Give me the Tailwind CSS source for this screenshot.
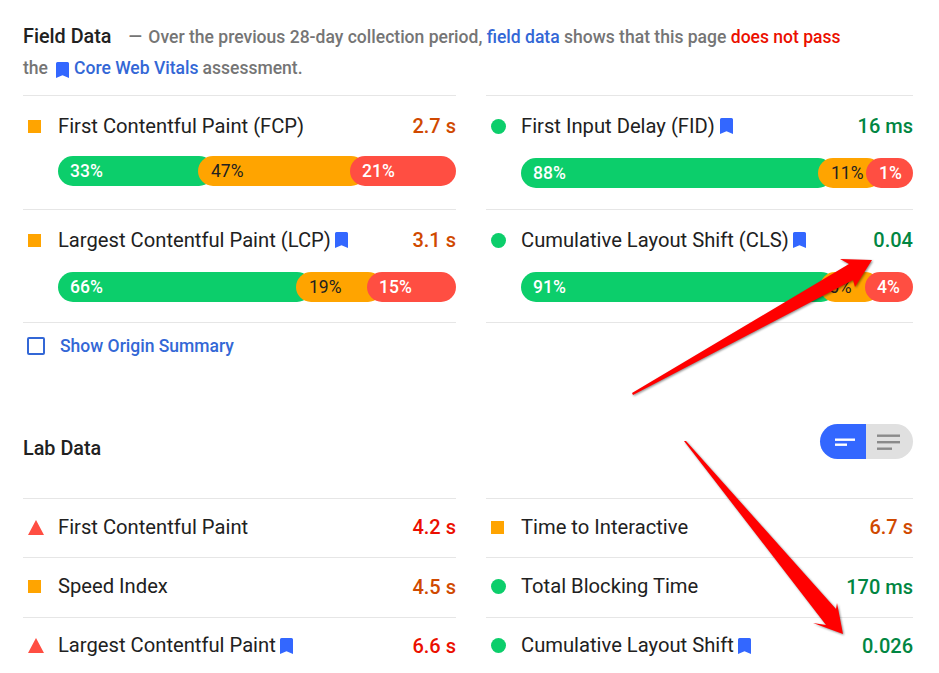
<!doctype html>
<html><head><meta charset="utf-8">
<script src="https://cdn.jsdelivr.net/npm/@tailwindcss/browser@4"></script>
</head>
<body class="bg-white">
<div class="relative w-[939px] h-[673px] overflow-hidden font-['Roboto',sans-serif] text-[#212121]">
  <svg width="0" height="0" class="absolute"><defs><symbol id="bm" viewBox="0 0 13 16"><path d="M1.5 0H11.5A1.5 1.5 0 0 1 13 1.5V16L6.5 13.2L0 16V1.5A1.5 1.5 0 0 1 1.5 0Z" fill="#3367FF"/></symbol></defs></svg>

  <div class="px-[23px] pt-[21px]">
    <div class="h-[74px] w-[890px] text-[17.55px] leading-[31px] font-medium text-[#757575]">
      <div class="flex items-baseline"><span class="text-[19.8px] font-medium text-[#212121] mr-[17px]">Field Data</span><span><span class="mr-[2px]">—</span> Over the previous 28-day collection period, <span class="text-[#3367d6]">field data</span> shows that this page <span class="text-[#eb0f00]">does not pass</span></span></div>
      <div class="flex items-center">the<svg class="w-[13px] h-[16px] ml-[8px] mr-[5px] mt-[2px]"><use href="#bm"/></svg><span class="text-[#3367d6]">Core Web Vitals</span><span class="ml-[4px]">assessment.</span></div>
    </div>

    <div class="grid grid-cols-[433px_427px] gap-x-[30px]">
      <div class="h-[115px] border-y border-[#e6e6e6] pt-[16px]">
        <div class="flex items-center h-[28px] text-[20.2px]"><span class="w-[13px] h-[13px] bg-[#ffa400] ml-[5px] mr-[17px]"></span><span>First Contentful Paint (FCP)</span><span class="ml-auto text-[20px] font-medium text-[#d04900]">2.7 s</span></div>
        <div class="flex ml-[35px] mt-[16px] h-[30px] text-[17.5px] leading-[30px]">
          <div class="w-[156px] shrink-0 rounded-full bg-[#0cce6b] font-medium text-white pl-[12px]">33%</div>
          <div class="w-[168px] shrink-0 -ml-[16px] rounded-full bg-[#ffa400] text-[#212121] pl-[13px]">47%</div>
          <div class="w-[106px] shrink-0 -ml-[16px] rounded-full bg-[#ff4e42] font-medium text-white pl-[12px]">21%</div>
        </div>
      </div>
      <div class="h-[115px] border-y border-[#e6e6e6] pt-[16px]">
        <div class="flex items-center h-[28px] text-[20.2px]"><span class="w-[15px] h-[15px] rounded-full bg-[#0cce6b] ml-[5px] mr-[15px]"></span><span>First Input Delay (FID)</span><svg class="w-[13px] h-[16px] ml-[5px]"><use href="#bm"/></svg><span class="ml-auto text-[20px] font-medium text-[#018642]">16 ms</span></div>
        <div class="flex ml-[35px] mt-[18px] h-[30px] text-[17.5px] leading-[30px]">
          <div class="w-[312px] shrink-0 rounded-full bg-[#0cce6b] font-medium text-white pl-[12px]">88%</div>
          <div class="w-[64px] shrink-0 -ml-[15px] rounded-full bg-[#ffa400] text-[#212121] pl-[13px]">11%</div>
          <div class="w-[47px] shrink-0 -ml-[16px] rounded-full bg-[#ff4e42] font-medium text-white pl-[13px]">1%</div>
        </div>
      </div>

      <div class="h-[113px] border-b border-[#e6e6e6] pt-[16px]">
        <div class="flex items-center h-[28px] text-[20.2px]"><span class="w-[13px] h-[13px] bg-[#ffa400] ml-[5px] mr-[17px]"></span><span>Largest Contentful Paint (LCP)</span><svg class="w-[13px] h-[16px] ml-[4px]"><use href="#bm"/></svg><span class="ml-auto text-[20px] font-medium text-[#d04900]">3.1 s</span></div>
        <div class="flex ml-[35px] mt-[18px] h-[30px] text-[17.5px] leading-[30px]">
          <div class="w-[254px] shrink-0 rounded-full bg-[#0cce6b] font-medium text-white pl-[12px]">66%</div>
          <div class="w-[87px] shrink-0 -ml-[16px] rounded-full bg-[#ffa400] text-[#212121] pl-[13px]">19%</div>
          <div class="w-[89px] shrink-0 -ml-[16px] rounded-full bg-[#ff4e42] font-medium text-white pl-[12px]">15%</div>
        </div>
      </div>
      <div class="h-[113px] border-b border-[#e6e6e6] pt-[16px]">
        <div class="flex items-center h-[28px] text-[20.2px]"><span class="w-[15px] h-[15px] rounded-full bg-[#0cce6b] ml-[5px] mr-[15px]"></span><span>Cumulative Layout Shift (CLS)</span><svg class="w-[13px] h-[16px] ml-[4px]"><use href="#bm"/></svg><span class="ml-auto text-[20px] font-medium text-[#018642]">0.04</span></div>
        <div class="flex ml-[35px] mt-[18px] h-[30px] text-[17.5px] leading-[30px]">
          <div class="w-[315px] shrink-0 rounded-full bg-[#0cce6b] font-medium text-white pl-[12px]">91%</div>
          <div class="w-[60px] shrink-0 -ml-[16px] rounded-full bg-[#ffa400] text-[#212121] pl-[9px]">5%</div>
          <div class="w-[48px] shrink-0 -ml-[15px] rounded-full bg-[#ff4e42] font-medium text-white pl-[12px]">4%</div>
        </div>
      </div>
    </div>

    <div class="flex items-center mt-[14px] h-[18px] pl-[4px]"><span class="w-[18px] h-[18px] border-2 border-[#3367d6] rounded-[2px]"></span><span class="ml-[15px] text-[17.5px] font-medium text-[#3367d6]">Show Origin Summary</span></div>

    <div class="flex justify-between items-start h-[80px] w-[890px] mt-[69px]">
      <div class="text-[19.8px] font-medium leading-[24px] mt-[13px] text-[#212121]">Lab Data</div>
      <div class="flex h-[35px]">
        <div class="w-[46px] h-[35px] bg-[#3367ff] rounded-l-full flex items-center justify-center pl-[4px]"><svg width="20" height="10" viewBox="0 0 20 10"><rect x="0" y="1.5" width="20" height="2.4" fill="#fff"/><rect x="0" y="6.5" width="12" height="2.4" fill="#fff"/></svg></div>
        <div class="w-[47px] h-[35px] bg-[#e0e0e0] rounded-r-full flex items-center pl-[11px]"><svg width="23" height="16" viewBox="0 0 23 16"><rect width="23" height="2.4" y="0.5" fill="#8a8a8a"/><rect width="23" height="2.4" y="7" fill="#8a8a8a"/><rect width="15" height="2.4" y="13.5" fill="#8a8a8a"/></svg></div>
      </div>
    </div>

    <div class="grid grid-cols-[433px_427px] gap-x-[30px] -mt-[6px]">
      <div class="h-[59px] pb-[2px] border-t border-[#e6e6e6] flex items-center text-[20.2px]"><svg class="ml-[5px] mr-[14px]" width="16" height="15" viewBox="0 0 16 15"><path d="M8 0L16 15H0Z" fill="#ff4e42"/></svg><span>First Contentful Paint</span><span class="ml-auto text-[20px] font-medium text-[#eb0f00]">4.2 s</span></div>
      <div class="h-[59px] pb-[2px] border-t border-[#e6e6e6] flex items-center text-[20.2px]"><span class="w-[13px] h-[13px] bg-[#ffa400] ml-[5px] mr-[17px]"></span><span>Time to Interactive</span><span class="ml-auto text-[20px] font-medium text-[#d04900]">6.7 s</span></div>
      <div class="h-[60px] pb-[2px] border-t border-[#e6e6e6] flex items-center text-[20.2px]"><span class="w-[13px] h-[13px] bg-[#ffa400] ml-[5px] mr-[17px]"></span><span>Speed Index</span><span class="ml-auto text-[20px] font-medium text-[#d04900]">4.5 s</span></div>
      <div class="h-[60px] pb-[2px] border-t border-[#e6e6e6] flex items-center text-[20.2px]"><span class="w-[15px] h-[15px] rounded-full bg-[#0cce6b] ml-[5px] mr-[15px]"></span><span>Total Blocking Time</span><span class="ml-auto text-[20px] font-medium text-[#018642]">170 ms</span></div>
      <div class="h-[56px] border-t border-[#e6e6e6] flex items-center text-[20.2px]"><svg class="ml-[5px] mr-[14px]" width="16" height="15" viewBox="0 0 16 15"><path d="M8 0L16 15H0Z" fill="#ff4e42"/></svg><span>Largest Contentful Paint</span><svg class="w-[13px] h-[16px] ml-[4px]"><use href="#bm"/></svg><span class="ml-auto text-[20px] font-medium text-[#eb0f00]">6.6 s</span></div>
      <div class="h-[56px] border-t border-[#e6e6e6] flex items-center text-[20.2px]"><span class="w-[15px] h-[15px] rounded-full bg-[#0cce6b] ml-[5px] mr-[15px]"></span><span>Cumulative Layout Shift</span><svg class="w-[13px] h-[16px] ml-[4px]"><use href="#bm"/></svg><span class="ml-auto text-[20px] font-medium text-[#018642]">0.026</span></div>
    </div>
  </div>

  <svg class="absolute left-0 top-0 drop-shadow-[1px_1px_1px_rgba(0,0,0,0.45)]" width="939" height="673" viewBox="0 0 939 673">
    <path d="M632 393L633 395L853 280L855 287L872 260L840 259L849 264L632 393Z" fill="#ff0000"/>
    <path d="M684 441L686 441L836 609L837 603L843 634L813 623L826 625L684 441Z" fill="#ff0000"/>
  </svg>
</div>
</body></html>
